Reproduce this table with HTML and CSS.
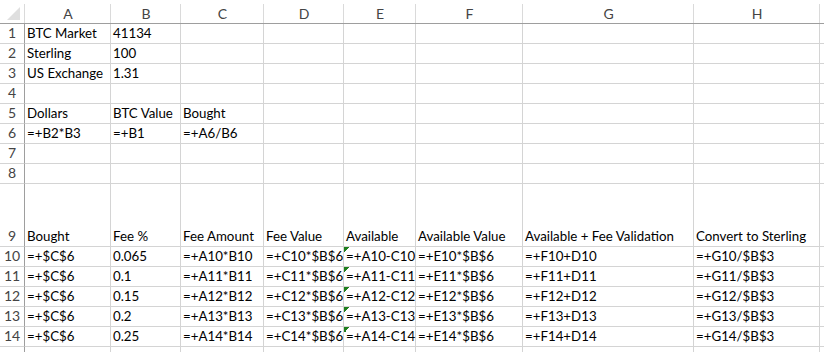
FILE: index.html
```html
<!DOCTYPE html>
<html>
<head>
<meta charset="utf-8">
<link rel="stylesheet" href="styles.css">
</head>
<body>
<div class="sheet">
  <div class="corner"><svg width="13" height="13" viewBox="0 0 13 13"><polygon points="0,13 13,13 13,0" fill="#dfdfdf"/></svg></div>
  <div class="ch">A</div><div class="ch">B</div><div class="ch">C</div><div class="ch">D</div><div class="ch">E</div><div class="ch">F</div><div class="ch">G</div><div class="ch">H</div><div class="ch fill"></div>

  <div class="rh">1</div><div class="c">BTC Market</div><div class="c">41134</div><div class="c"></div><div class="c"></div><div class="c"></div><div class="c"></div><div class="c"></div><div class="c"></div><div class="c fill"></div>
  <div class="rh">2</div><div class="c">Sterling</div><div class="c">100</div><div class="c"></div><div class="c"></div><div class="c"></div><div class="c"></div><div class="c"></div><div class="c"></div><div class="c fill"></div>
  <div class="rh">3</div><div class="c">US Exchange</div><div class="c">1.31</div><div class="c"></div><div class="c"></div><div class="c"></div><div class="c"></div><div class="c"></div><div class="c"></div><div class="c fill"></div>
  <div class="rh">4</div><div class="c"></div><div class="c"></div><div class="c"></div><div class="c"></div><div class="c"></div><div class="c"></div><div class="c"></div><div class="c"></div><div class="c fill"></div>
  <div class="rh">5</div><div class="c">Dollars</div><div class="c">BTC Value</div><div class="c">Bought</div><div class="c"></div><div class="c"></div><div class="c"></div><div class="c"></div><div class="c"></div><div class="c fill"></div>
  <div class="rh">6</div><div class="c">=+B2*B3</div><div class="c">=+B1</div><div class="c">=+A6/B6</div><div class="c"></div><div class="c"></div><div class="c"></div><div class="c"></div><div class="c"></div><div class="c fill"></div>
  <div class="rh">7</div><div class="c"></div><div class="c"></div><div class="c"></div><div class="c"></div><div class="c"></div><div class="c"></div><div class="c"></div><div class="c"></div><div class="c fill"></div>
  <div class="rh">8</div><div class="c"></div><div class="c"></div><div class="c"></div><div class="c"></div><div class="c"></div><div class="c"></div><div class="c"></div><div class="c"></div><div class="c fill"></div>
  <div class="rh">9</div><div class="c">Bought</div><div class="c">Fee %</div><div class="c">Fee Amount</div><div class="c">Fee Value</div><div class="c">Available</div><div class="c">Available Value</div><div class="c">Available + Fee Validation</div><div class="c">Convert to Sterling</div><div class="c fill"></div>
  <div class="rh">10</div><div class="c">=+$C$6</div><div class="c">0.065</div><div class="c">=+A10*B10</div><div class="c">=+C10*$B$6</div><div class="c flag">=+A10-C10</div><div class="c">=+E10*$B$6</div><div class="c">=+F10+D10</div><div class="c">=+G10/$B$3</div><div class="c fill"></div>
  <div class="rh">11</div><div class="c">=+$C$6</div><div class="c">0.1</div><div class="c">=+A11*B11</div><div class="c">=+C11*$B$6</div><div class="c flag">=+A11-C11</div><div class="c">=+E11*$B$6</div><div class="c">=+F11+D11</div><div class="c">=+G11/$B$3</div><div class="c fill"></div>
  <div class="rh">12</div><div class="c">=+$C$6</div><div class="c">0.15</div><div class="c">=+A12*B12</div><div class="c">=+C12*$B$6</div><div class="c flag">=+A12-C12</div><div class="c">=+E12*$B$6</div><div class="c">=+F12+D12</div><div class="c">=+G12/$B$3</div><div class="c fill"></div>
  <div class="rh">13</div><div class="c">=+$C$6</div><div class="c">0.2</div><div class="c">=+A13*B13</div><div class="c">=+C13*$B$6</div><div class="c flag">=+A13-C13</div><div class="c">=+E13*$B$6</div><div class="c">=+F13+D13</div><div class="c">=+G13/$B$3</div><div class="c fill"></div>
  <div class="rh">14</div><div class="c">=+$C$6</div><div class="c">0.25</div><div class="c">=+A14*B14</div><div class="c">=+C14*$B$6</div><div class="c flag">=+A14-C14</div><div class="c">=+E14*$B$6</div><div class="c">=+F14+D14</div><div class="c">=+G14/$B$3</div><div class="c fill"></div>
  <div class="rh"></div><div class="c"></div><div class="c"></div><div class="c"></div><div class="c"></div><div class="c"></div><div class="c"></div><div class="c"></div><div class="c"></div><div class="c fill"></div>
</div>
</body>
</html>
```
FILE: styles.css
```css
html, body {
  margin: 0;
  padding: 0;
  background: #fff;
  overflow: hidden;
}
body {
  width: 824px;
  height: 352px;
}
.sheet {
  display: grid;
  grid-template-columns: 25px 86px 70px 83px 80px 72px 107px 171px 126px 1fr;
  grid-template-rows: 24px repeat(8, 20px) 63px repeat(6, 20px);
  font-family: Lato, "Noto Sans", sans-serif;
  font-size: 13.3px;
  color: #000;
}
.sheet > div {
  box-sizing: border-box;
  white-space: nowrap;
  overflow: visible;
}
.corner {
  display: flex;
  align-items: flex-end;
  justify-content: flex-end;
  padding: 0 5px 3px 0;
  border-bottom: 1px solid #9e9e9e;
  background: linear-gradient(#dadada, #dadada) right 0 top 4px / 1px calc(100% - 4px) no-repeat;
}
.corner svg {
  display: block;
}
.ch {
  display: flex;
  align-items: center;
  justify-content: center;
  padding-top: 3px;
  font-size: 14px;
  color: #444;
  border-bottom: 1px solid #9e9e9e;
  background: linear-gradient(#dadada, #dadada) right 0 top 4px / 1px calc(100% - 4px) no-repeat;
}
.ch.fill {
  background: none;
}
.rh {
  display: flex;
  align-items: flex-end;
  justify-content: center;
  padding-bottom: 1px;
  line-height: 18px;
  font-size: 14px;
  color: #444;
  border-right: 1px solid #9e9e9e;
  border-bottom: 1px solid #d4d4d4;
}
.c {
  display: flex;
  align-items: flex-end;
  padding: 0 0 1px 2px;
  line-height: 18px;
  border-right: 1px solid #d4d4d4;
  border-bottom: 1px solid #d4d4d4;
}
.c.fill {
  border-right: none;
}
.c.flag {
  background: linear-gradient(135deg, #1e7e1e 0, #1e7e1e 50%, transparent 50%) left top / 6px 6px no-repeat;
}
```
